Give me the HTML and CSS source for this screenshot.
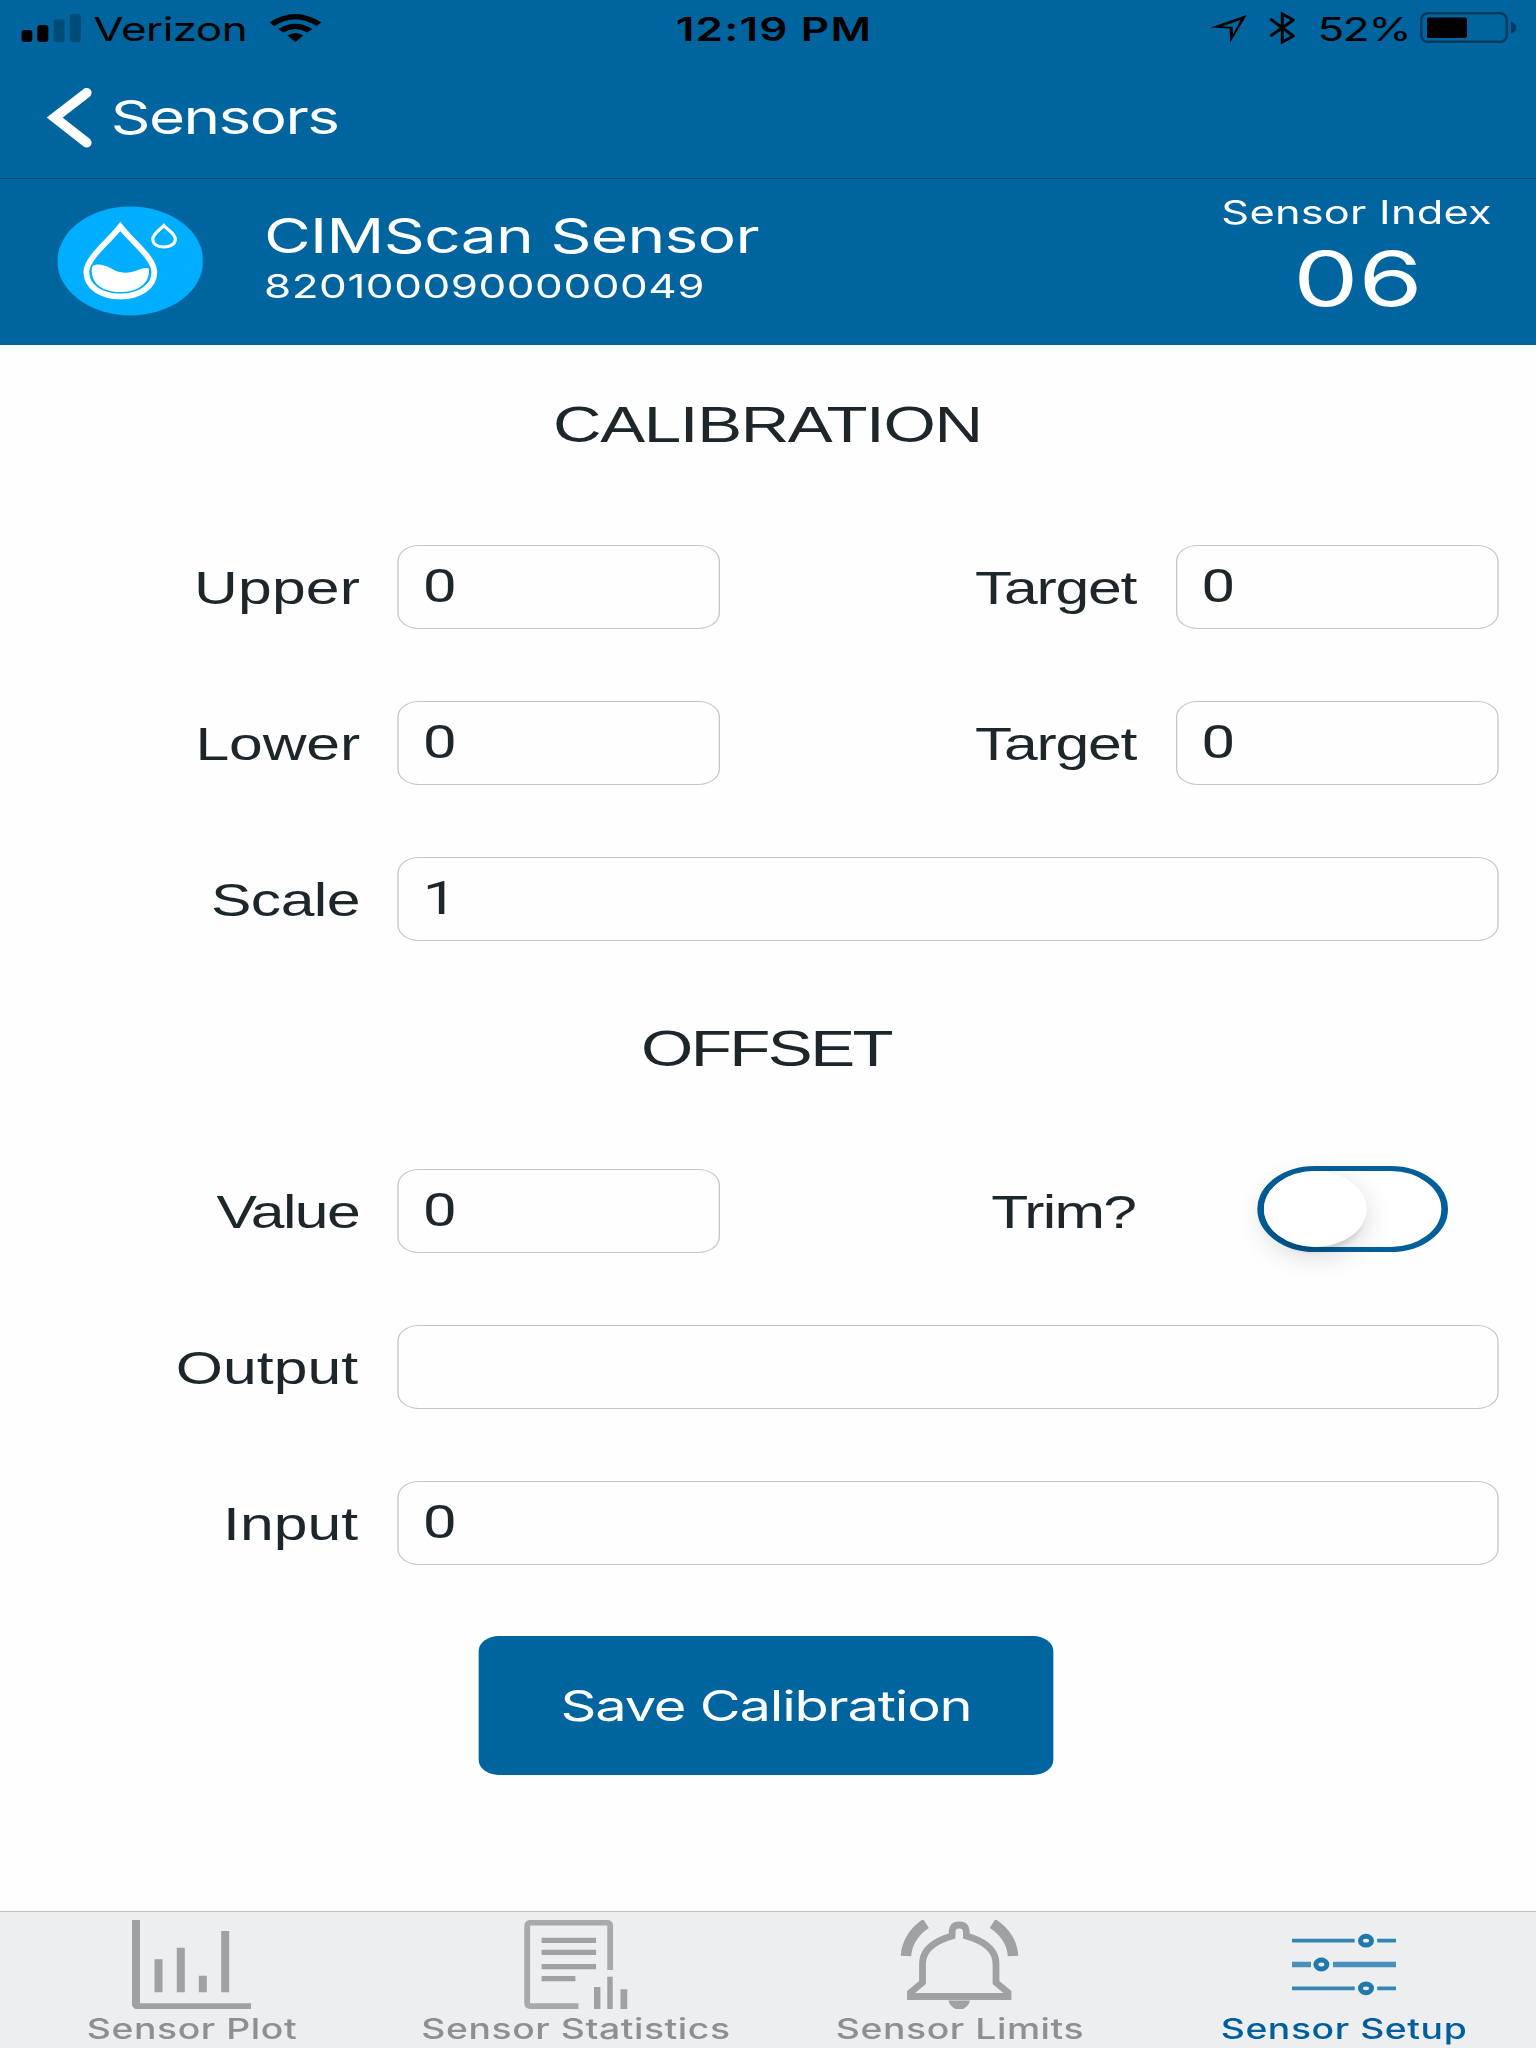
FILE: index.html
```
<!DOCTYPE html>
<html lang="en">
<head>
<meta charset="utf-8">
<title>Sensor Setup</title>
<link rel="stylesheet" href="styles.css">
</head>
<body>
<div class="screen">
  <header class="top">
    <div class="status">
      <div class="status-left">
        <svg class="i-signal" viewBox="0 0 60 28" preserveAspectRatio="none">
          <rect x="0" y="16" width="11" height="12" rx="3"/><rect x="16" y="11" width="11" height="17" rx="3"/>
          <rect class="dim" x="32.300" y="5.500" width="11" height="22.500" rx="3"/><rect class="dim" x="48.500" y="0" width="11" height="28" rx="3"/>
        </svg>
        <span class="carrier">Verizon</span>
        <svg class="i-wifi" viewBox="0 0 52 28" preserveAspectRatio="none">
          <path d="M0 8.500 Q26 -8.500 52 8.500 L47 12 Q26 -1.500 5 12Z"/>
          <path d="M9 15 Q26 4.500 43 15 L38 18.500 Q26 11.500 14 18.500Z"/>
          <path d="M18 21.500 Q26 16.500 34 21.500 L26 28Z"/>
        </svg>
      </div>
      <span class="clock">12:19 PM</span>
      <div class="status-right">
        <svg class="i-loc" viewBox="0 0 36 28" preserveAspectRatio="none"><path d="M0 12.500 L36 0 L19.500 27.500 L19 13.500 Z M11 11.500 L22 11.700 L22.500 19 L30 5Z" fill-rule="evenodd"/></svg>
        <svg class="i-bt" viewBox="0 0 26 34" preserveAspectRatio="none"><path d="M1 8 L24 25 L13 31 V3 L24 9 L1 25" fill="none" stroke="#000" stroke-width="3"/></svg>
        <span class="percent">52%</span>
        <svg class="i-batt" viewBox="0 0 97 31" preserveAspectRatio="none">
          <rect x="1.200" y="1.200" width="85.600" height="28.600" rx="6.500" fill="none" stroke="#003a5f" stroke-width="2.400"/>
          <rect x="7" y="5.500" width="40" height="20.500" rx="2"/><path d="M91 9.500 Q96.500 12 96.500 15.500 T91 21.500Z" fill="#003a5f"/>
        </svg>
      </div>
    </div>
    <nav class="nav">
      <svg class="i-back" viewBox="0 0 46 60" preserveAspectRatio="none"><path d="M40 4.800 L8 29.500 L40 54.700" fill="none" stroke="#fff" stroke-width="9.800" stroke-linecap="round" stroke-miterlimit="10"/></svg>
      <span class="nav-title">Sensors</span>
    </nav>
    <section class="sensor">
      <svg class="i-sensor" viewBox="0 0 146 110" preserveAspectRatio="none">
        <ellipse cx="73" cy="55" rx="73" ry="54.500" fill="#00aeff"/>
        <path d="M63 20.500 C53 34 29 52 29 66 C29 81 44 90.500 63 90.500 C82 90.500 97 81 97 66 C97 52 73 34 63 20.500Z" fill="none" stroke="#fff" stroke-width="5.800"/>
        <path d="M34.500 62 C36 57 45 58 53 62 C60 66.500 66 67.500 74 66 C81 64.500 87 60.500 91.500 62.500 C93 78 80 86 63 86 C46 86 33 78 34.500 62Z" fill="#fff"/>
        <path d="M106.500 19.500 C102 24.500 95.500 28 95.500 33 C95.500 38 100 41 106.500 41 C113 41 118 38 118 33 C118 28 111 24.500 106.500 19.500Z" fill="none" stroke="#fff" stroke-width="3.200"/>
      </svg>
      <div class="sensor-text">
        <div class="sensor-name">CIMScan Sensor</div>
        <div class="sensor-id">8201000900000049</div>
      </div>
      <div class="sensor-index">
        <div class="index-label">Sensor Index</div>
        <div class="index-value">06</div>
      </div>
    </section>
  </header>

  <main class="form">
    <h1 class="heading">CALIBRATION</h1>
    <div class="row"><label class="label upper">Upper</label><div class="field">0</div><label class="label target">Target</label><div class="field">0</div></div>
    <div class="row"><label class="label lower">Lower</label><div class="field">0</div><label class="label target">Target</label><div class="field">0</div></div>
    <div class="row"><label class="label scale">Scale</label><div class="field wide">1</div></div>
    <h1 class="heading offset">OFFSET</h1>
    <div class="row"><label class="label value">Value</label><div class="field">0</div><label class="label trim">Trim?</label><div class="toggle"><span class="knob"></span></div></div>
    <div class="row"><label class="label output">Output</label><div class="field wide"></div></div>
    <div class="row"><label class="label input">Input</label><div class="field wide">0</div></div>
    <button class="save">Save Calibration</button>
  </main>

  <footer class="tabs">
    <div class="tab">
      <svg class="i-plot" viewBox="0 0 119 89" preserveAspectRatio="none"><path d="M0 0H8V83.300H119V89H3L0 86ZM22.500 39.300h8v33h-8zM44.800 27.700h8v44.600h-8zM66.800 55.700h8v16.600h-8zM89.200 11h8v61.300h-8z"/></svg>
      <span>Sensor Plot</span>
    </div>
    <div class="tab">
      <svg class="i-stats" viewBox="0 0 104 89" preserveAspectRatio="none">
        <path d="M86.200 50V6Q86.200 2.700 82 2.700H7.500Q3.200 2.700 3.200 6V83Q3.200 86.200 7.500 86.200H54.500" fill="none" stroke="#a8a9aa" stroke-width="5.800"/>
        <path d="M17.600 17.700h54.500v5.200H17.600zM17.600 29.700h54.500v5.200H17.600zM17.600 44.100h54.500v5.200H17.600zM17.600 56.100h33.800v5.200H17.600zM70 67h6.400v22H70zM83.300 56.700h5.400v32.300h-5.400zM96.500 69.300h6.800v19.700h-6.800z"/>
      </svg>
      <span>Sensor Statistics</span>
    </div>
    <div class="tab">
      <svg class="i-bell" viewBox="0 0 119 89" preserveAspectRatio="none">
        <path d="M6 36C6.500 23 14.500 11 26 3.500M113 36C112.500 23 104.500 11 92.500 3.500" fill="none" stroke="#a0a1a2" stroke-width="10.500"/>
        <path d="M52 16C52 8 53 5 59.200 5S66.500 8 66.500 16C84 21 96 30 96 44V62.500L108 72.500V76.500H10.500V72.500L22.500 62.500V44C22.500 30 34.500 21 52 16Z" fill="none" stroke="#a0a1a2" stroke-width="6.800"/>
        <path d="M48.500 80.500H70Q69 86 63 89H55.500Q49.500 86 48.500 80.500Z"/>
      </svg>
      <span>Sensor Limits</span>
    </div>
    <div class="tab active">
      <svg class="i-setup" viewBox="0 0 104 89" preserveAspectRatio="none">
        <path d="M0 20.700H62.700M85.200 20.700H104M0 68.300H62.700M85.200 68.300H104" stroke="#3584b4" stroke-width="3.800"/>
        <path d="M0 44.500H19M41 44.500H104" stroke="#4a90bb" stroke-width="5.400"/>
        <g fill="none" stroke="#2078ad" stroke-width="5"><ellipse cx="74" cy="20.700" rx="5.500" ry="4.400"/><ellipse cx="29.400" cy="44.500" rx="5.500" ry="4.400"/><ellipse cx="74" cy="68.300" rx="5.500" ry="4.400"/></g>
      </svg>
      <span>Sensor Setup</span>
    </div>
  </footer>
</div>
</body>
</html>
```
FILE: styles.css
```
* { box-sizing: border-box; }
html, body { margin: 0; background: #fff; }
body { width: 1536px; height: 2048px; overflow: hidden; }

/* The interface is laid out on a 1152px canvas and widened to fill a 4:3 display. */
.screen {
  width: 1152px; height: 2048px;
  display: flex; flex-direction: column;
  transform: scaleX(1.33333); transform-origin: 0 0;
  font-family: Inter, "Liberation Sans", sans-serif;
  background: #fefefe;
}
svg { display: block; flex: none; }
.top { background: #00649e; color: #fff; height: 345px; }

.status {
  height: 58px; display: grid; grid-template-columns: 1fr auto 1fr;
  color: #000; font-size: 33px; line-height: 58px; white-space: nowrap;
}
.status-left, .status-right { display: flex; align-items: flex-start; }
.status-left { padding-left: 16px; }
.status-right { justify-content: flex-end; padding-right: 14px; }
.dim { fill: #004b77; }
.i-signal { width: 45px; height: 28px; margin: 14px 9px 0 0; }
.carrier { letter-spacing: -.42px; }
.i-wifi { width: 39px; height: 28px; margin: 14px 0 0 17px; }
.clock { font-weight: 600; letter-spacing: .9px; padding-left: 9px; }
.i-loc { width: 27px; height: 28px; margin: 15px 16.5px 0 0; }
.i-bt { width: 19.5px; height: 34px; margin: 11px 17px 0 0; }
.percent { letter-spacing: -.97px; }
.i-batt { width: 72.75px; height: 31px; margin: 12px 0 0 7.5px; }

.nav {
  height: 121px; display: flex; align-items: center;
  padding: 0 0 2px 35px; border-bottom: 1px solid #004a75;
}
.i-back { width: 34.5px; height: 60px; margin: 1px 13.5px 0 0; }
.nav-title { font-size: 46.5px; letter-spacing: -1.15px; line-height: 60px; }

.sensor { height: 166px; display: flex; padding: 0 33px 0 42.5px; }
.i-sensor { width: 109.5px; height: 110px; margin-top: 27px; }
.sensor-text { margin-left: 46px; padding-top: 31px; flex: 1; }
.sensor-name { font-size: 48px; line-height: 51px; letter-spacing: -.5px; }
.sensor-id { font-size: 33px; line-height: 50px; letter-spacing: .4px; }
.sensor-index { text-align: center; padding-top: 14px; }
.index-label { font-size: 32.5px; line-height: 40px; letter-spacing: .18px; }
.index-value { font-size: 75px; line-height: 92px; transform: scaleX(1.035); padding-left: 2px; }

.form {
  flex: 1; display: flex; flex-direction: column; gap: 73px;
  padding-top: 38px; color: #1c262b;
}
.heading {
  margin: 0; height: 89px; text-align: center;
  font: 400 50.5px/83px "Liberation Sans", Arial, sans-serif; letter-spacing: -1.05px;
  padding-right: 1px;
}
.offset { height: 83px; line-height: 71px; letter-spacing: -1.93px; padding-right: 3px; }
.row {
  height: 83px; display: grid; padding-right: 28px;
  grid-template-columns: 270px 242px 1fr 242px; column-gap: 28px;
}
.label {
  font: 45.5px/88px "Liberation Sans", Arial, sans-serif;
  text-align: right; white-space: nowrap;
}
.upper { letter-spacing: .1px; }
.lower { letter-spacing: -.1px; }
.target { letter-spacing: -.95px; padding-right: 2px; }
.scale { letter-spacing: -.4px; }
.value { letter-spacing: -1.2px; padding-right: .7px; }
.trim { letter-spacing: -1.3px; padding-right: 2.5px; }
.output { padding-right: 1.5px; }
.input { letter-spacing: 0; padding-right: 1.5px; }
.field {
  height: 84px; border: 1px solid #c6c7c8; border-radius: 16px;
  padding-left: 18px; font: 45.5px/81px Roboto, "Liberation Sans", sans-serif;
}
.wide { grid-column: 2 / 5; }
.toggle {
  width: 142.5px; height: 86px; margin: -3px 0 0 61px;
  border: 5px solid #005f9b; border-radius: 43px; background: #fff;
}
.knob {
  display: block; width: 77px; height: 76px; border-radius: 50%; background: #fff;
  box-shadow: 0 8px 24px rgba(0,0,0,.16), 0 8px 4px -3px rgba(0,0,0,.1);
}
.save {
  width: 431px; height: 139px; margin: -1px 0 0 359px; padding: 0;
  border: 0; border-radius: 15px; background: #00649e; color: #fff;
  font: 42px/139px Inter, sans-serif; letter-spacing: -.9px;
}

.tabs {
  height: 137px; display: grid; grid-template-columns: repeat(4, 1fr);
  border-top: 1px solid #bfc3c5; background: #edeef0; color: #8e8f91;
}
.tab {
  padding-top: 8px; display: flex; flex-direction: column; align-items: center;
  font-size: 28px; font-weight: 500; line-height: 40px; letter-spacing: .42px;
}
.tab svg { height: 89px; fill: #a0a1a2; }
.active { color: #005f9b; }
.i-plot, .i-bell { width: 89.25px; }
.i-stats, .i-setup { width: 78px; }
```
